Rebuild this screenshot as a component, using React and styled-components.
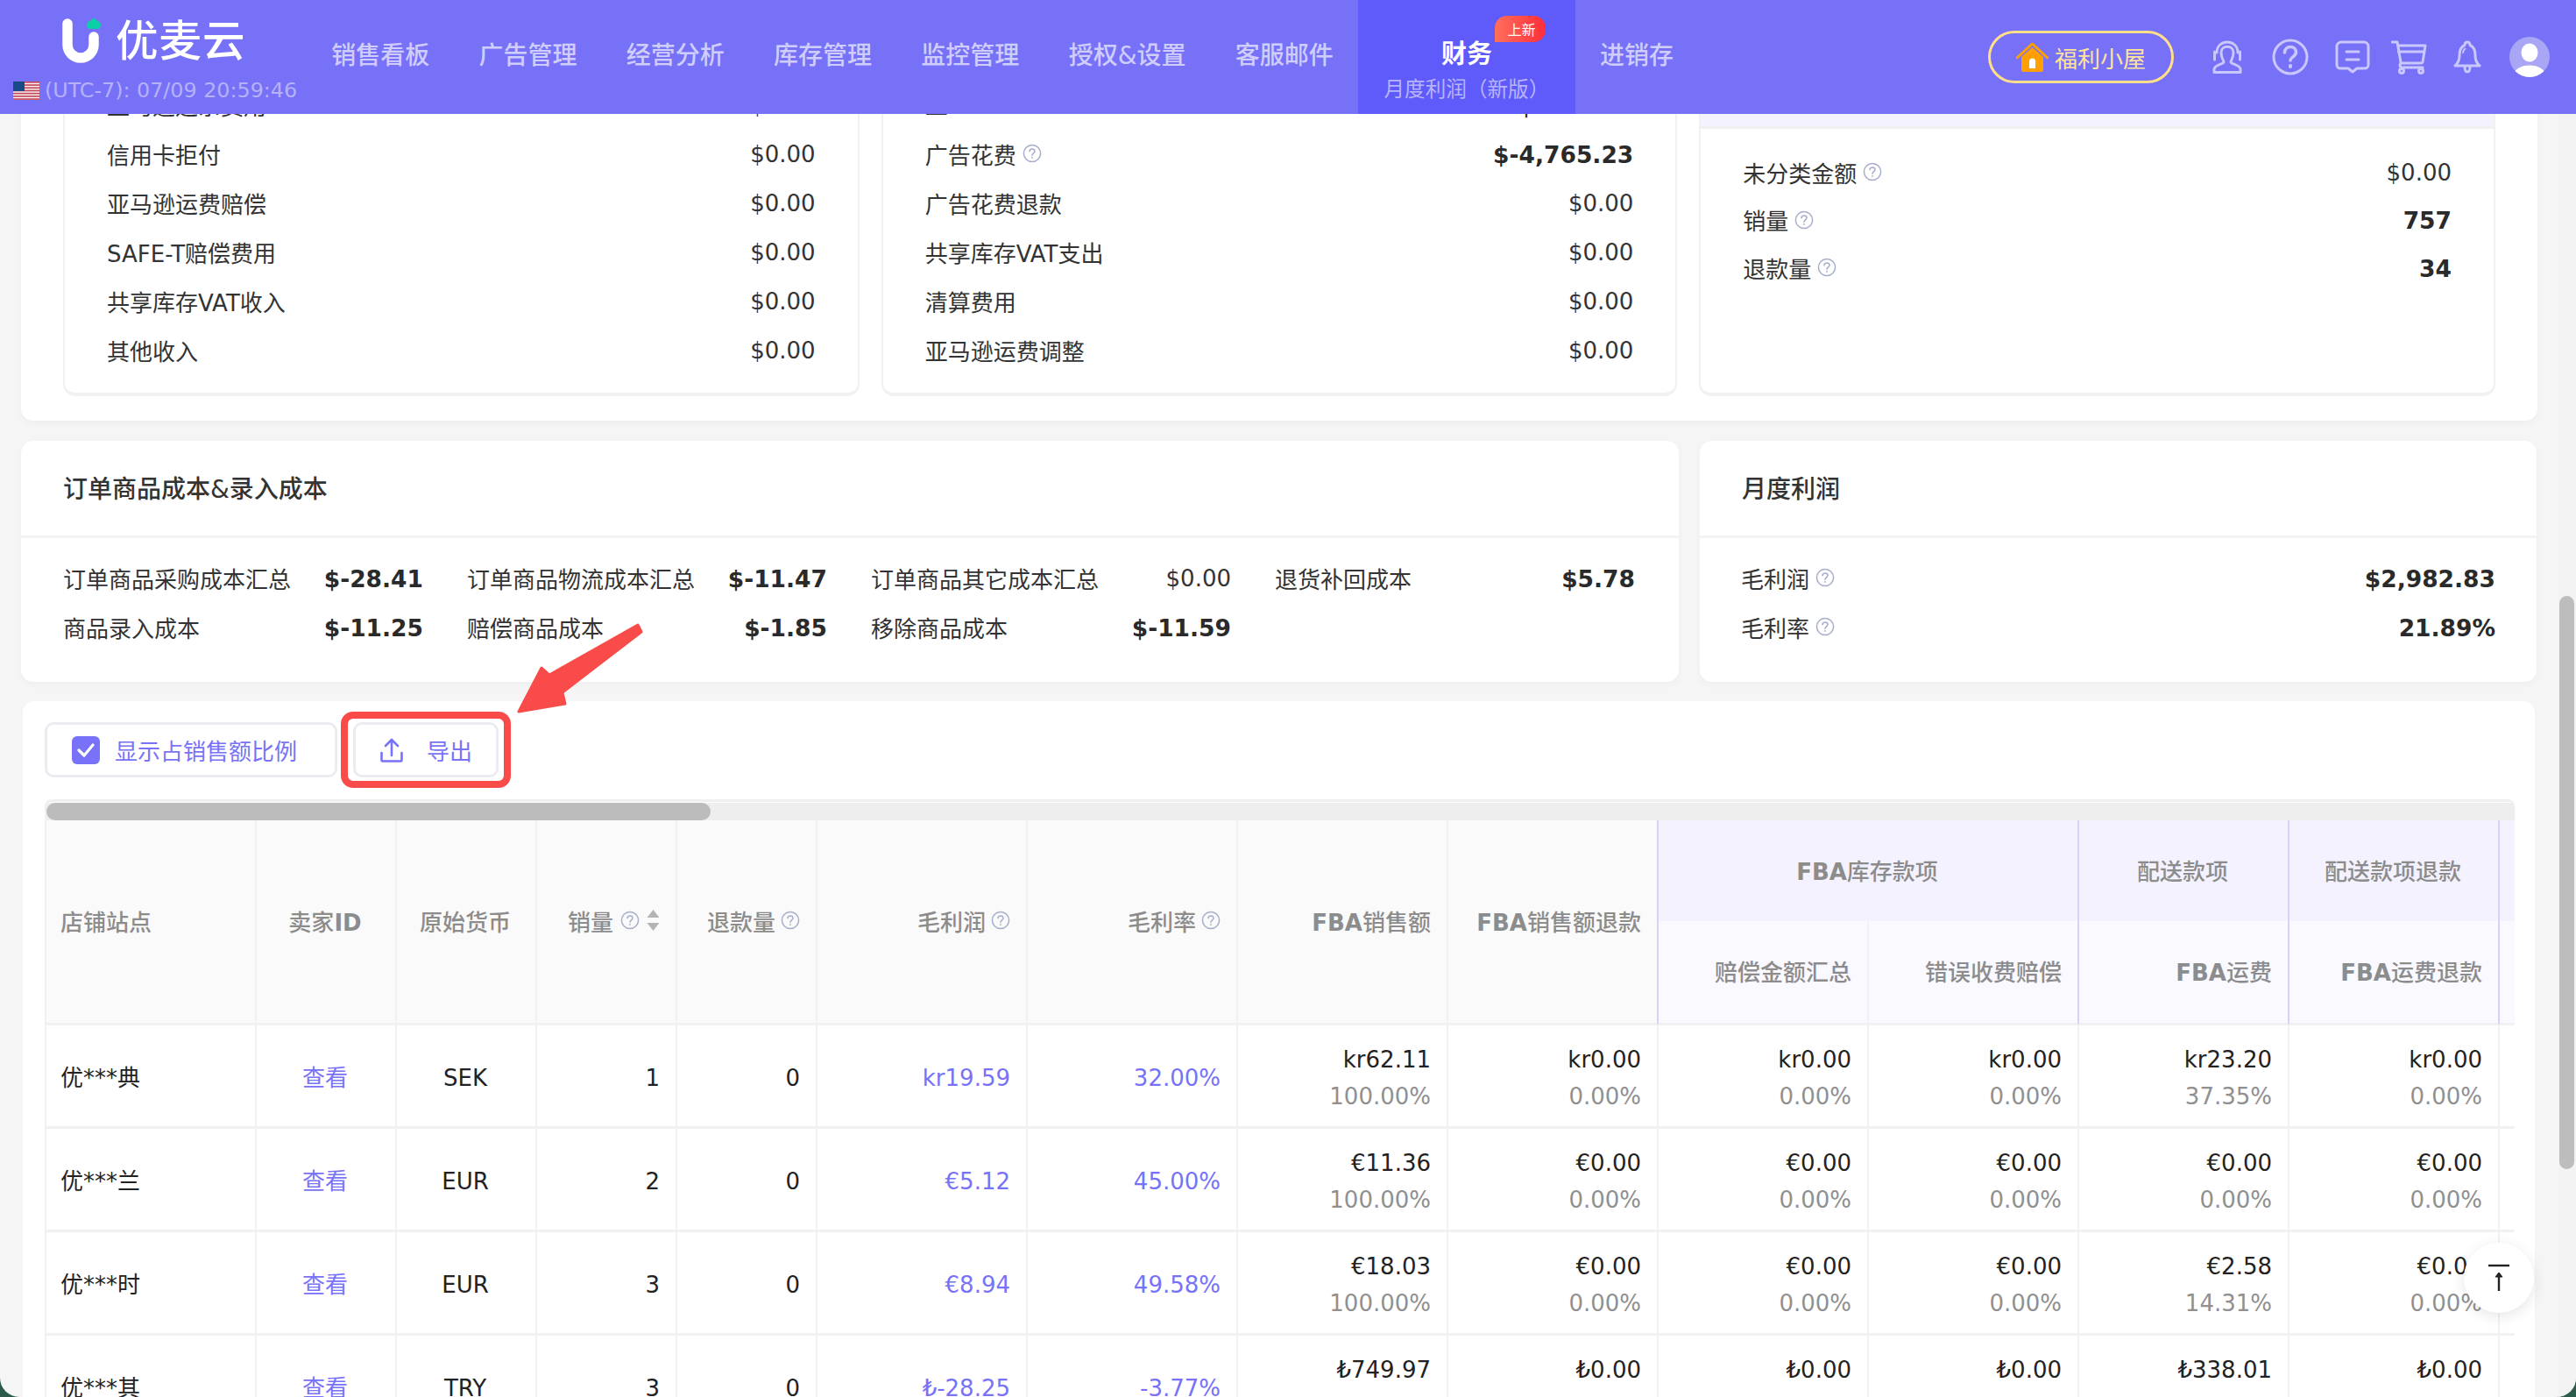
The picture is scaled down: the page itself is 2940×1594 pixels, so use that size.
import React from 'react';
import styled, { createGlobalStyle } from 'styled-components';

const PURPLE = '#7772f7';
const FONT = '"DejaVu Sans", "Noto Sans CJK SC", sans-serif';

const Global = createGlobalStyle`
  html, body { margin: 0; padding: 0; background: #2d5b4b; }
  body { font-family: ${FONT}; color: #333; }
  * { box-sizing: border-box; }
`;

const Window = styled.div`
  position: relative;
  width: 2940px;
  height: 1594px;
  overflow: hidden;
  background: #f5f5f5;
  border-radius: 0 0 22px 22px;
  font-size: 26px;
`;

/* ---------- top bar ---------- */
const TopBar = styled.header`
  position: absolute;
  top: 0;
  left: 0;
  right: 0;
  z-index: 5;
  height: 130px;
  display: flex;
  background: #7771f7;
  color: #cfcdfc;
`;
const Brand = styled.div`
  width: 350px;
  flex: none;
  display: flex;
  flex-direction: column;
  padding: 22px 0 0 15px;
`;
const LogoRow = styled.div`
  display: flex;
  align-items: center;
  height: 50px;
  padding-left: 56px;
  gap: 17px;
`;
const LogoText = styled.span`
  font-size: 48.5px;
  line-height: 50px;
  font-weight: 500;
  color: #fff;
  letter-spacing: 1px;
`;
const TimeRow = styled.div`
  display: flex;
  align-items: center;
  gap: 6px;
  margin-top: 18px;
  font-size: 23.8px;
  line-height: 26px;
  color: #b5b2fb;
  white-space: nowrap;
`;
const NavItem = styled.a`
  flex: none;
  padding: 0 28.15px 8px;
  height: 130px;
  display: flex;
  align-items: center;
  font-size: 28px;
  font-weight: 500;
  color: #cfcdfc;
`;
const ActiveNav = styled.a`
  position: relative;
  flex: none;
  width: 248px;
  height: 130px;
  display: flex;
  flex-direction: column;
  align-items: center;
  padding-top: 42px;
  background: #5f5afa;
`;
const ActiveTitle = styled.span`
  font-size: 29px;
  line-height: 40px;
  font-weight: 700;
  color: #fff;
`;
const ActiveSub = styled.span`
  margin-top: 2px;
  font-size: 23.6px;
  line-height: 36px;
  color: #b7b4fc;
  white-space: nowrap;
`;
const NewBadge = styled.span`
  position: absolute;
  left: 156px;
  top: 18px;
  width: 58px;
  height: 30px;
  padding-left: 3px;
  display: flex;
  align-items: center;
  justify-content: center;
  font-size: 16px;
  color: #fff;
  border-radius: 14px 14px 14px 0;
  background: linear-gradient(90deg, #ff6f5c, #ff2d3a);
`;
const Actions = styled.div`
  margin-left: auto;
  display: flex;
  align-items: center;
  padding-right: 30px;
`;
const WelfarePill = styled.a`
  width: 212px;
  height: 60px;
  display: flex;
  align-items: center;
  justify-content: center;
  gap: 7px;
  border: 3px solid #ffdf8a;
  border-radius: 30px;
  font-size: 26px;
  color: #ffe49a;
  margin-right: 44px;
`;
const IconSlot = styled.span`
  display: flex;
  margin-left: ${(p) => p.$gap || 0}px;
`;

/* ---------- content ---------- */
const Main = styled.main`
  padding-left: 24px;
  width: 2896px;
`;
const SummaryCard = styled.section`
  height: 480px;
  background: #fff;
  border-radius: 0 0 14px 14px;
  box-shadow: 0 3px 8px rgba(0, 0, 0, 0.03);
  padding: 0 48px 28px;
  display: grid;
  grid-template-columns: repeat(3, 1fr);
  gap: 25px;
`;
const SubCard = styled.div`
  border: 2px solid #f1f1f1;
  border-top: 0;
  border-bottom-width: 4px;
  border-radius: 0 0 14px 14px;
  padding: ${(p) => (p.$plain ? '92px 48px 0' : '0')};
`;
const SubTint = styled.div`
  height: 147px;
  background: #f3f2fe;
  border-bottom: 3px solid #f0f0f3;
`;
const SubBody = styled.div`
  padding: 23px 48px 0;
`;
const KV = styled.div`
  display: flex;
  align-items: center;
  justify-content: space-between;
  height: ${(p) => p.$h || 56}px;
  white-space: nowrap;
`;
const KLabel = styled.span`
  display: inline-flex;
  align-items: center;
  gap: 7px;
  margin-bottom: 2px;
  color: #333;
`;
const KValue = styled.span`
  font-size: ${(p) => (p.$bold ? 26.5 : 26)}px;
  font-weight: ${(p) => (p.$bold ? 700 : 400)};
  color: ${(p) => (p.$bold ? '#2a2a2a' : '#333')};
`;
const CostGrid = styled.div`
  display: grid;
  grid-template-columns: 1892px 955px;
  gap: 24px;
  margin-top: 23px;
`;
const Card = styled.section`
  height: 275px;
  background: #fff;
  border-radius: 14px;
  box-shadow: 0 3px 8px rgba(0, 0, 0, 0.03);
`;
const CardTitle = styled.h3`
  margin: 0;
  height: 111px;
  padding: 0 0 2px 48px;
  display: flex;
  align-items: center;
  border-bottom: 3px solid #f3f3f3;
  font-size: 28px;
  font-weight: 500;
  color: #333;
`;
const CostBody = styled.div`
  padding: 18px 48px 0;
  display: grid;
  grid-template-columns: repeat(4, 411px);
  column-gap: 50px;
`;
const ProfitBody = styled.div`
  padding: 18px 47px 0;
`;

const TableCard = styled.section`
  margin: 22px 3px 0 2px;
  padding: 24px 23px 0 25px;
  height: 900px;
  background: #fff;
  border-radius: 14px 14px 0 0;
`;
const Toolbar = styled.div`
  display: flex;
  gap: 18px;
  height: 63px;
`;
const ToolButton = styled.button`
  height: 63px;
  width: ${(p) => p.$w}px;
  display: flex;
  align-items: center;
  gap: ${(p) => p.$gap}px;
  padding: 0 0 0 ${(p) => p.$pad}px;
  background: #fff;
  border: 3px solid #ecebf2;
  border-radius: 10px;
  font-family: inherit;
  font-size: 26px;
  color: ${PURPLE};
`;
const CheckBox = styled.span`
  width: 32px;
  height: 32px;
  display: flex;
  align-items: center;
  justify-content: center;
  background: ${PURPLE};
  border-radius: 6px;
`;
const TableBox = styled.div`
  margin-top: 25px;
  border-top: 3px solid #efefef;
  border-left: 2px solid #f1f1f1;
  border-radius: 8px 8px 0 0;
  overflow: hidden;
`;
const ScrollTrack = styled.div`
  margin-top: 1px;
  height: 20px;
  background: #eeeeee;
`;
const ScrollThumb = styled.div`
  width: 758px;
  height: 20px;
  background: #bcbcbc;
  border-radius: 10px;
`;
const Grid = styled.table`
  table-layout: fixed;
  border-collapse: separate;
  border-spacing: 0;
  width: 3040px;
`;
const Th = styled.th`
  height: ${(p) => p.$h}px;
  padding: 0 18px 3px 16px;
  font-size: 26px;
  font-weight: 500;
  color: #8c8c8c;
  white-space: nowrap;
  text-align: ${(p) => p.$align || 'right'};
  background: ${(p) => p.$bg || '#fafafa'};
  border-right: 2px solid ${(p) => p.$line || '#f1f1f1'};
  border-bottom: ${(p) => (p.$noBottom ? '0' : '3px solid #f1f1f1')};
`;
const HeadInner = styled.span`
  display: inline-flex;
  align-items: center;
  gap: ${(p) => p.$gap || 6}px;
`;
const Latin = styled.b`
  font-weight: 700;
`;
const Td = styled.td`
  height: 118px;
  padding: 5px 18px 0 16px;
  font-size: 26px;
  line-height: 42px;
  white-space: nowrap;
  vertical-align: middle;
  text-align: ${(p) => p.$align || 'right'};
  color: ${(p) => (p.$accent ? PURPLE : '#222')};
  border-right: 2px solid #f1f1f1;
  border-bottom: 3px solid #f1f1f1;
`;
const Share = styled.div`
  color: #909090;
`;

/* ---------- overlays ---------- */
const Watermarks = styled.div`
  position: absolute;
  inset: 0;
  z-index: 3;
  overflow: hidden;
  pointer-events: none;
`;
const Mark = styled.span`
  position: absolute;
  font-size: 23px;
  font-style: italic;
  color: rgba(0, 0, 0, 0.02);
  transform: translate(-50%, -50%) rotate(-27deg);
`;
const PageTrack = styled.div`
  position: absolute;
  top: 0;
  right: 0;
  bottom: 0;
  width: 20px;
  z-index: 4;
  background: #f3f3f3;
`;
const PageThumb = styled.div`
  position: absolute;
  left: 1px;
  top: 680px;
  width: 17px;
  height: 654px;
  background: #bdbdbd;
  border-radius: 9px;
`;
const BackTop = styled.button`
  position: absolute;
  z-index: 4;
  left: 2812px;
  top: 1418px;
  width: 80px;
  height: 80px;
  padding: 0;
  display: flex;
  align-items: center;
  justify-content: center;
  background: #fff;
  border: 0;
  border-radius: 50%;
  box-shadow: 0 4px 16px rgba(0, 0, 0, 0.1);
`;
const Callout = styled.div`
  position: absolute;
  z-index: 4;
  left: 389px;
  top: 812px;
  width: 194px;
  height: 87px;
  border: 8px solid #f94c4a;
  border-radius: 14px;
`;
const ArrowSvg = styled.svg`
  position: absolute;
  z-index: 4;
  left: 585px;
  top: 705px;
`;

/* ---------- drawings ---------- */
const Help = () => (
  <svg width="22" height="22" viewBox="0 0 22 22" fill="none" stroke="#a6aecb" strokeWidth="1.5" strokeLinecap="round">
    <circle cx="11" cy="11" r="9.6" />
    <path d="M8 8.8c0-1.8 1.4-2.9 3-2.9s3 1.1 3 2.7c0 2.2-3 2.5-3 4.7" />
    <path d="M11 15.6v.6" />
  </svg>
);
const Sort = () => (
  <svg width="15" height="24" viewBox="0 0 14 24" fill="#b4b4b4">
    <path d="M7 0l7 9H0z" />
    <path d="M7 24L0 15h14z" />
  </svg>
);
const Logo = () => (
  <svg width="44" height="52" viewBox="0 0 44 52" fill="none">
    <path d="M6 6v24a15 15 0 0 0 30 0v-9" stroke="#fff" strokeWidth="11.5" strokeLinecap="round" />
    <path d="M36 0c2 0 3 2 4 3 2 .5 4 2 4 4.500 0 2.500-2 4.500-4.500 4.500h-7c-2.500 0-4.500-2-4.500-4.500S30 3.500 32 3c1-1 2-3 4-3z" fill="#0bd0a6" />
  </svg>
);
const Flag = () => (
  <svg width="30" height="21" viewBox="0 0 30 21">
    <rect width="30" height="21" fill="#f3f3f3" />
    {[0, 3.2, 6.4, 9.6, 12.8, 16, 19.200].map((y) => (
      <rect key={y} y={y} width="30" height="1.700" fill="#c8485a" />
    ))}
    <rect width="13" height="11" fill="#174a86" />
  </svg>
);
const House = () => (
  <svg width="37" height="33" viewBox="0 0 37 33" fill="none">
    <path d="M1 17L18.500 1 36 17" stroke="#ff9f00" strokeWidth="3" strokeLinecap="round" strokeLinejoin="round" />
    <path d="M6 16L18.500 5 31 16v15a2 2 0 0 1-2 2H8a2 2 0 0 1-2-2z" fill="#ff9f00" />
    <path d="M15 25v-4a3.500 3.500 0 0 1 7 0v8h-7z" fill="#fff" />
  </svg>
);
const iconStroke = { fill: 'none', stroke: '#c9c7fc', strokeWidth: 3, strokeLinecap: 'round', strokeLinejoin: 'round' };
const Headset = () => (
  <svg width="34" height="38" viewBox="0 0 34 38" {...iconStroke}>
    <path d="M5 14C5-2 29-2 29 14" />
    <path d="M2.500 13v9M31.500 13v9" />
    <path d="M10 14C10 5 24 5 24 14c0 6-3 9-3 11 0 2 11 3 11 8v3.500H2V33c0-5 11-6 11-8 0-2-3-5-3-11z" />
  </svg>
);
const Question = () => (
  <svg width="42" height="42" viewBox="0 0 42 42" {...iconStroke}>
    <circle cx="21" cy="21" r="19" />
    <path d="M14.500 16c0-4 3-6.500 6.500-6.500s6.500 2.500 6.500 6c0 5-6.500 5.500-6.500 9.500" strokeWidth="3.600" />
    <path d="M21 31v1" strokeWidth="4" />
  </svg>
);
const Comment = () => (
  <svg width="40" height="38" viewBox="0 0 40 38" {...iconStroke}>
    <path d="M7 2h26a5 5 0 0 1 5 5v21a4 4 0 0 1-4 4h-9l-5 4-5-4H6a4 4 0 0 1-4-4V7a5 5 0 0 1 5-5z" />
    <path d="M13 13h14M13 22h14" />
  </svg>
);
const Cart = () => (
  <svg width="41" height="39" viewBox="0 0 41 39" {...iconStroke}>
    <path d="M1 2h6l4 23" />
    <path d="M8 6h31l-3 19a2 2 0 0 1-2 1H13c-4 0-4 5 0 5h23" />
    <path d="M8.500 13H38" />
    <circle cx="12" cy="35" r="2.500" />
    <circle cx="34" cy="35" r="2.500" />
  </svg>
);
const Bell = () => (
  <svg width="32" height="38" viewBox="0 0 32 38" {...iconStroke}>
    <path d="M16 2c2 0 3 1.500 3 3.500 5 2 6 7 6 12 0 5 1 8 5 11.500H2c4-3.500 5-6.500 5-11.500 0-5 1-10 6-12C13 3.500 14 2 16 2z" />
    <path d="M13 30c0 4 1.500 6 3 6s3-2 3-6" />
    <path d="M11 14c.4-2 1.200-3.500 2.500-4.500" strokeWidth="2" />
  </svg>
);
const Avatar = () => (
  <svg width="46" height="46" viewBox="0 0 46 46">
    <clipPath id="av"><circle cx="23" cy="23" r="23" /></clipPath>
    <g clipPath="url(#av)">
      <rect width="46" height="46" fill="#a9a6f6" />
      <ellipse cx="23" cy="18" rx="9.500" ry="10.500" fill="#fff" />
      <ellipse cx="23" cy="44" rx="18" ry="11.500" fill="#fff" />
    </g>
  </svg>
);

/* ---------- data ---------- */
const NAV = ['销售看板', '广告管理', '经营分析', '库存管理', '监控管理', '授权&设置', '客服邮件'];
const INCOME = [
  ['亚马逊运杂费用', '$0.00'],
  ['信用卡拒付', '$0.00'],
  ['亚马逊运费赔偿', '$0.00'],
  ['SAFE-T赔偿费用', '$0.00'],
  ['共享库存VAT收入', '$0.00'],
  ['其他收入', '$0.00'],
];
const COSTS = [
  ['工***', '$-165.20', true],
  ['广告花费', '$-4,765.23', true, true],
  ['广告花费退款', '$0.00'],
  ['共享库存VAT支出', '$0.00'],
  ['清算费用', '$0.00'],
  ['亚马逊运费调整', '$0.00'],
];
const OTHER = [
  ['未分类金额', '$0.00', false],
  ['销量', '757', true],
  ['退款量', '34', true],
];
const ORDER_COST = [
  ['订单商品采购成本汇总', '$-28.41'],
  ['订单商品物流成本汇总', '$-11.47'],
  ['订单商品其它成本汇总', '$0.00', true],
  ['退货补回成本', '$5.78'],
  ['商品录入成本', '$-11.25'],
  ['赔偿商品成本', '$-1.85'],
  ['移除商品成本', '$-11.59'],
];
const WIDTHS = [240, 160, 160, 160, 160, 240, 240, 240, 240, 240, 240, 240, 240, 240];
const zero = (c) => [`${c}0.00`, '0.00%'];
const ROWS = [
  { shop: '优***典', cur: 'SEK', qty: 1, gp: 'kr19.59', rate: '32.00%', cells: [['kr62.11', '100.00%'], zero('kr'), zero('kr'), zero('kr'), ['kr23.20', '37.35%'], zero('kr')] },
  { shop: '优***兰', cur: 'EUR', qty: 2, gp: '€5.12', rate: '45.00%', cells: [['€11.36', '100.00%'], zero('€'), zero('€'), zero('€'), zero('€'), zero('€')] },
  { shop: '优***时', cur: 'EUR', qty: 3, gp: '€8.94', rate: '49.58%', cells: [['€18.03', '100.00%'], zero('€'), zero('€'), zero('€'), ['€2.58', '14.31%'], zero('€')] },
  { shop: '优***其', cur: 'TRY', qty: 3, gp: '₺-28.25', rate: '-3.77%', cells: [['₺749.97', '100.00%'], zero('₺'), zero('₺'), zero('₺'), ['₺338.01', '45.07%'], zero('₺')] },
];
const GROUP = '#f3f2fe';
const SUB = '#faf9ff';
const GROUP_LINE = '#d6d3fb';

const marks = [];
for (let i = -1; i < 10; i += 1) {
  for (let j = 0; j < 15; j += 1) {
    const x = 459 + 290 * i;
    const y = 55 - 8 * i + 110 * j;
    marks.push([x, y]);
    marks.push([x + 145, y + 50]);
  }
}

export default function App() {
  return (
    <Window>
      <Global />
      <TopBar>
        <Brand>
          <LogoRow>
            <Logo />
            <LogoText>优麦云</LogoText>
          </LogoRow>
          <TimeRow>
            <Flag />
            (UTC-7): 07/09 20:59:46
          </TimeRow>
        </Brand>
        {NAV.map((n) => (
          <NavItem key={n}>{n}</NavItem>
        ))}
        <ActiveNav>
          <ActiveTitle>财务</ActiveTitle>
          <ActiveSub>月度利润（新版）</ActiveSub>
          <NewBadge>上新</NewBadge>
        </ActiveNav>
        <NavItem>进销存</NavItem>
        <Actions>
          <WelfarePill>
            <House />
            福利小屋
          </WelfarePill>
          <IconSlot><Headset /></IconSlot>
          <IconSlot $gap={34}><Question /></IconSlot>
          <IconSlot $gap={30}><Comment /></IconSlot>
          <IconSlot $gap={24}><Cart /></IconSlot>
          <IconSlot $gap={30}><Bell /></IconSlot>
          <IconSlot $gap={32}><Avatar /></IconSlot>
        </Actions>
      </TopBar>

      <Main>
        <SummaryCard>
          <SubCard $plain>
            {INCOME.map(([k, v]) => (
              <KV key={k}>
                <KLabel>{k}</KLabel>
                <KValue>{v}</KValue>
              </KV>
            ))}
          </SubCard>
          <SubCard $plain>
            {COSTS.map(([k, v, bold, help]) => (
              <KV key={k}>
                <KLabel>{k}{help && <Help />}</KLabel>
                <KValue $bold={bold}>{v}</KValue>
              </KV>
            ))}
          </SubCard>
          <SubCard>
            <SubTint />
            <SubBody>
              {OTHER.map(([k, v, bold]) => (
                <KV key={k} $h={54.5}>
                  <KLabel>{k}<Help /></KLabel>
                  <KValue $bold={bold}>{v}</KValue>
                </KV>
              ))}
            </SubBody>
          </SubCard>
        </SummaryCard>

        <CostGrid>
          <Card>
            <CardTitle>订单商品成本&amp;录入成本</CardTitle>
            <CostBody>
              {ORDER_COST.map(([k, v, plain]) => (
                <KV key={k}>
                  <KLabel>{k}</KLabel>
                  <KValue $bold={!plain}>{v}</KValue>
                </KV>
              ))}
            </CostBody>
          </Card>
          <Card>
            <CardTitle>月度利润</CardTitle>
            <ProfitBody>
              <KV>
                <KLabel>毛利润<Help /></KLabel>
                <KValue $bold>$2,982.83</KValue>
              </KV>
              <KV>
                <KLabel>毛利率<Help /></KLabel>
                <KValue $bold>21.89%</KValue>
              </KV>
            </ProfitBody>
          </Card>
        </CostGrid>

        <TableCard>
          <Toolbar>
            <ToolButton $w={334} $gap={17} $pad={28}>
              <CheckBox>
                <svg width="20" height="16" viewBox="0 0 20 16" fill="none" stroke="#fff" strokeWidth="3.200" strokeLinecap="round" strokeLinejoin="round">
                  <path d="M2 8l6 6L18 2" />
                </svg>
              </CheckBox>
              显示占销售额比例
            </ToolButton>
            <ToolButton $w={166} $gap={27} $pad={28}>
              <svg width="26" height="28" viewBox="0 0 26 28" fill="none" stroke={PURPLE} strokeWidth="2.600" strokeLinecap="round" strokeLinejoin="round">
                <path d="M13 20V2M6 9l7-7 7 7" />
                <path d="M1.500 17v8.500a1 1 0 0 0 1 1h21a1 1 0 0 0 1-1V17" />
              </svg>
              导出
            </ToolButton>
          </Toolbar>
          <TableBox>
            <ScrollTrack>
              <ScrollThumb />
            </ScrollTrack>
            <Grid>
              <colgroup>
                {WIDTHS.map((w, i) => (
                  <col key={i} width={w} />
                ))}
              </colgroup>
              <thead>
                <tr>
                  <Th rowSpan={2} $h={234} $align="left">店铺站点</Th>
                  <Th rowSpan={2} $h={234} $align="center">卖家<Latin>ID</Latin></Th>
                  <Th rowSpan={2} $h={234} $align="center">原始货币</Th>
                  <Th rowSpan={2} $h={234}><HeadInner $gap={8}>销量<Help /><Sort /></HeadInner></Th>
                  <Th rowSpan={2} $h={234}><HeadInner>退款量<Help /></HeadInner></Th>
                  <Th rowSpan={2} $h={234}><HeadInner>毛利润<Help /></HeadInner></Th>
                  <Th rowSpan={2} $h={234}><HeadInner>毛利率<Help /></HeadInner></Th>
                  <Th rowSpan={2} $h={234}><Latin>FBA</Latin>销售额</Th>
                  <Th rowSpan={2} $h={234} $line={GROUP_LINE}><Latin>FBA</Latin>销售额退款</Th>
                  <Th colSpan={2} $h={115} $align="center" $bg={GROUP} $line={GROUP_LINE} $noBottom><Latin>FBA</Latin>库存款项</Th>
                  <Th $h={115} $align="center" $bg={GROUP} $line={GROUP_LINE} $noBottom>配送款项</Th>
                  <Th $h={115} $align="center" $bg={GROUP} $line={GROUP_LINE} $noBottom>配送款项退款</Th>
                  <Th $h={115} $bg={GROUP} $line={GROUP_LINE} $noBottom />
                </tr>
                <tr>
                  <Th $h={119} $bg={SUB}>赔偿金额汇总</Th>
                  <Th $h={119} $bg={SUB} $line={GROUP_LINE}>错误收费赔偿</Th>
                  <Th $h={119} $bg={SUB} $line={GROUP_LINE}><Latin>FBA</Latin>运费</Th>
                  <Th $h={119} $bg={SUB} $line={GROUP_LINE}><Latin>FBA</Latin>运费退款</Th>
                  <Th $h={119} $bg={SUB} $line={GROUP_LINE} />
                </tr>
              </thead>
              <tbody>
                {ROWS.map((r) => (
                  <tr key={r.shop}>
                    <Td $align="left">{r.shop}</Td>
                    <Td $align="center" $accent>查看</Td>
                    <Td $align="center">{r.cur}</Td>
                    <Td>{r.qty}</Td>
                    <Td>0</Td>
                    <Td $accent>{r.gp}</Td>
                    <Td $accent>{r.rate}</Td>
                    {r.cells.map(([a, b], i) => (
                      <Td key={i}>
                        <div>{a}</div>
                        <Share>{b}</Share>
                      </Td>
                    ))}
                    <Td />
                  </tr>
                ))}
              </tbody>
            </Grid>
          </TableBox>
        </TableCard>
      </Main>

      <Watermarks>
        {marks.map(([x, y], i) => (
          <Mark key={i} style={{ left: x, top: y }}>17185</Mark>
        ))}
      </Watermarks>

      <PageTrack>
        <PageThumb />
      </PageTrack>

      <BackTop aria-label="top">
        <svg width="26" height="32" viewBox="0 0 26 32" fill="none" stroke="#222" strokeWidth="2.400">
          <path d="M1 2h24" />
          <path d="M13 31V11" />
          <path d="M9 15l4-5 4 5z" fill="#222" strokeWidth="1" />
        </svg>
      </BackTop>

      <Callout />
      <ArrowSvg width="150" height="112" viewBox="585 705 150 112">
        <path
          d="M728 713L627 770L618 762L592 812L645 803L642 790L732 721Z"
          fill="#f94c4a"
          stroke="#f94c4a"
          strokeWidth="3"
          strokeLinejoin="round"
        />
      </ArrowSvg>
    </Window>
  );
}
